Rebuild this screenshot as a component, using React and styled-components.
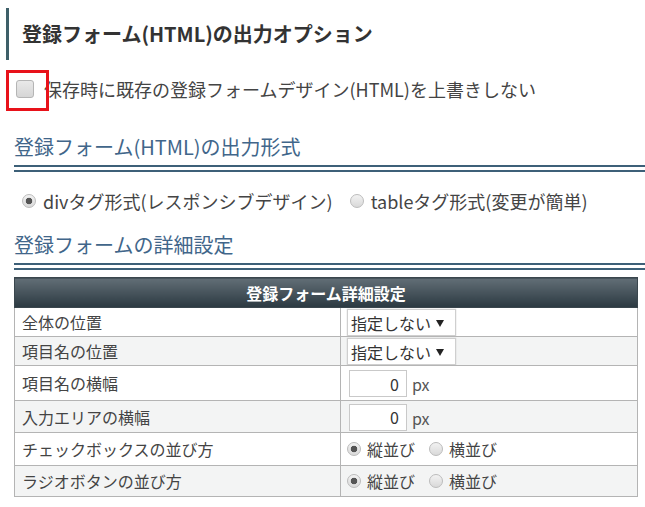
import styled, { createGlobalStyle } from "styled-components";

const Global = createGlobalStyle`
  body {
    margin: 0;
    background: #fff;
    font-family: "Noto Sans CJK JP", "Noto Sans", sans-serif;
    color: #333;
  }
`;

const Page = styled.div`
  padding-top: 8px;
`;

// 見出し(左に縦線)
const Title = styled.h2`
  margin: 0 0 0 6px;
  border-left: 3px solid #3e5f68;
  padding-left: 13px;
  height: 52px;
  line-height: 52px;
  font-size: 20px;
  font-weight: bold;
  color: #333;
`;

const CheckRow = styled.label`
  position: relative;
  display: flex;
  align-items: center;
  gap: 10px;
  margin: 15px 0 0 16px;
  height: 28px;
  font-size: 18px;
  color: #444;
`;

const Check = styled.input.attrs({ type: "checkbox" })`
  appearance: none;
  margin: 0;
  width: 18px;
  height: 18px;
  border: 1px solid #b5b5b5;
  border-radius: 3px;
  background: linear-gradient(#e9e9e9, #d6d6d6);
  flex: none;
`;

// 赤枠の強調(上に重なる)
const Highlight = styled.span`
  position: absolute;
  left: -10px;
  top: -5px;
  width: 43px;
  height: 41px;
  box-sizing: border-box;
  border: 3px solid #e8121a;
  pointer-events: none;
`;

const SectionTitle = styled.h3`
  margin: ${(p) => p.top}px 0 0 14px;
  padding-bottom: 3px;
  line-height: 30px;
  font-size: 20px;
  font-weight: normal;
  color: #41668a;
  border-bottom: 7px double #3d6078;
`;

const RadioRow = styled.div`
  display: flex;
  align-items: center;
  margin: 15px 0 0 22px;
  height: 28px;
  font-size: 18px;
  color: #444;
`;

const Option = styled.label`
  display: inline-flex;
  align-items: center;
  gap: ${(p) => p.gap || 7}px;
  margin-right: ${(p) => p.space || 0}px;
`;

const Radio = styled.input.attrs({ type: "radio" })`
  appearance: none;
  margin: 0;
  width: 14px;
  height: 14px;
  border-radius: 50%;
  border: 1px solid #bcbcbc;
  box-sizing: border-box;
  background: linear-gradient(#f2f2f2, #d9d9d9);
  flex: none;
  &:checked {
    background: radial-gradient(circle, #555 0 3px, transparent 3.6px),
      linear-gradient(#f2f2f2, #d9d9d9);
  }
`;

const Table = styled.table`
  margin: 7px 7px 0 14px;
  width: 624px;
  border-collapse: collapse;
  font-size: 16px;
  color: #444;
`;

const HeadCell = styled.th`
  height: 29px;
  padding: 0;
  background: linear-gradient(#626e76, #2b3941);
  color: #fff;
  font-size: 16px;
  font-weight: bold;
  text-align: center;
  border: 1px solid #3a464d;
`;

const Row = styled.tr`
  background: ${(p) => (p.shade ? "#f3f4f4" : "#fff")};
`;

const Label = styled.td`
  width: 318px;
  height: ${(p) => p.h || 28}px;
  padding: 0 0 0 7px;
  border: 1px solid #b4b4b4;
`;

const Value = styled.td`
  padding: 0 0 0 6px;
  border: 1px solid #b4b4b4;
`;

const SelectBox = styled.span`
  position: relative;
  display: inline-flex;
  vertical-align: middle;
`;

const Select = styled.select`
  appearance: none;
  width: 109px;
  height: 27px;
  margin: 0;
  padding: 0 0 0 3px;
  border: 1px solid #cfcfcf;
  border-radius: 0;
  box-shadow: 0 0 1px #bbb;
  background: #fff;
  font: inherit;
  font-size: 16px;
  color: #333;
`;

const Arrow = styled.svg`
  position: absolute;
  right: 12px;
  top: 11px;
  pointer-events: none;
`;

const NumInput = styled.input.attrs({ type: "text" })`
  width: 58px;
  height: 27px;
  box-sizing: border-box;
  margin: 0 5px 0 2px;
  padding: 0 7px 0 0;
  border: 1px solid #c9c9c9;
  text-align: right;
  font: inherit;
  font-size: 16px;
  color: #333;
  vertical-align: middle;
`;

const Unit = styled.span`
  vertical-align: middle;
  color: #555;
`;

const Pair = styled.span`
  display: inline-flex;
  align-items: center;
`;

function Dropdown() {
  return (
    <SelectBox>
      <Select defaultValue="none">
        <option value="none">指定しない</option>
      </Select>
      <Arrow width="8" height="7" viewBox="0 0 8 7">
        <path d="M0 0h8L4 7z" fill="#222" />
      </Arrow>
    </SelectBox>
  );
}

function Size() {
  return (
    <>
      <NumInput defaultValue="0" />
      <Unit>px</Unit>
    </>
  );
}

function Direction({ name }) {
  return (
    <Pair>
      <Option gap={6} space={14}>
        <Radio name={name} defaultChecked /> 縦並び
      </Option>
      <Option gap={6}>
        <Radio name={name} /> 横並び
      </Option>
    </Pair>
  );
}

export default function App() {
  return (
    <Page>
      <Global />
      <Title>登録フォーム(HTML)の出力オプション</Title>

      <CheckRow>
        <Check />
        保存時に既存の登録フォームデザイン(HTML)を上書きしない
        <Highlight />
      </CheckRow>

      <SectionTitle top={29}>登録フォーム(HTML)の出力形式</SectionTitle>
      <RadioRow>
        <Option space={17}>
          <Radio name="format" defaultChecked /> divタグ形式(レスポンシブデザイン)
        </Option>
        <Option>
          <Radio name="format" /> tableタグ形式(変更が簡単)
        </Option>
      </RadioRow>

      <SectionTitle top={15}>登録フォームの詳細設定</SectionTitle>
      <Table>
        <thead>
          <tr>
            <HeadCell colSpan={2}>登録フォーム詳細設定</HeadCell>
          </tr>
        </thead>
        <tbody>
          <Row>
            <Label>全体の位置</Label>
            <Value><Dropdown /></Value>
          </Row>
          <Row shade>
            <Label>項目名の位置</Label>
            <Value><Dropdown /></Value>
          </Row>
          <Row>
            <Label h={34}>項目名の横幅</Label>
            <Value><Size /></Value>
          </Row>
          <Row shade>
            <Label h={31}>入力エリアの横幅</Label>
            <Value><Size /></Value>
          </Row>
          <Row>
            <Label h={32}>チェックボックスの並び方</Label>
            <Value><Direction name="cb" /></Value>
          </Row>
          <Row shade>
            <Label h={30}>ラジオボタンの並び方</Label>
            <Value><Direction name="rb" /></Value>
          </Row>
        </tbody>
      </Table>
    </Page>
  );
}
